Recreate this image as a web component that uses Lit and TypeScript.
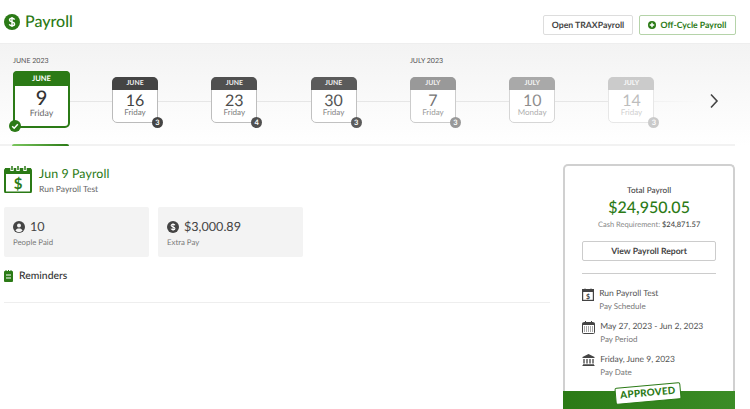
import { LitElement, html, css, unsafeCSS } from "lit";
import { customElement } from "lit/decorators.js";

const G = "#2b7a16";
const GC = unsafeCSS(G);

const cards = [
  { m: "JUNE", d: "16", w: "Friday", b: "3", o: 1, h: "#444" },
  { m: "JUNE", d: "23", w: "Friday", b: "4", o: 0.95, h: "#474747" },
  { m: "JUNE", d: "30", w: "Friday", b: "3", o: 0.9, h: "#4a4a4a" },
  { m: "JULY", d: "7", w: "Friday", b: "3", o: 0.75, h: "#777", label: "JULY 2023" },
  { m: "JULY", d: "10", w: "Monday", b: "", o: 0.6, h: "#717171" },
  { m: "JULY", d: "14", w: "Friday", b: "3", o: 0.35, h: "#6d6d6d" },
];

const dollar = (fill: string, size: number) => html`<svg width=${size} height=${size} viewBox="0 0 16 16">
  <circle cx="8" cy="8" r="8" fill=${fill}></circle>
  <path d="M10.6 5.6C10.2 4.7 9.2 4.3 8 4.3c-1.4 0-2.5.7-2.5 1.8 0 2.4 5.1 1.3 5.1 3.8 0 1.1-1.1 1.8-2.6 1.8-1.3 0-2.3-.5-2.7-1.5M8 3v10" fill="none" stroke="#fff" stroke-width="1.4"></path>
</svg>`;

@customElement("app-root")
export class AppRoot extends LitElement {
  static styles = css`
    :host { display: block; width: 750px; height: 409px; overflow: hidden; background: #fff; font-family: Lato, "Liberation Sans", sans-serif; color: #444; position: relative; text-rendering: geometricPrecision; }
    * { box-sizing: border-box; }
    .top { height: 43px; display: flex; align-items: center; padding: 0 14px 0 4px; }
    .title { display: flex; align-items: center; gap: 5px; font-size: 16px; color: ${GC}; font-weight: 500; flex: 1; }
    .btn { height: 20px; border: 1px solid #ddd; border-radius: 2px; font-size: 8.700px; font-weight: 700; color: #444; display: flex; align-items: center; justify-content: center; background: #fff; margin-top: 6px; }
    .trax { width: 90px; margin-right: 6px; }
    .off { width: 97px; color: ${GC}; border-color: #b5d3a9; gap: 5px; padding-right: 1px; }
    .strip { height: 103px; background: linear-gradient(#f3f3f3, #fff); border-top: 1px solid #eee; position: relative; padding: 13px 0 0 13px; display: flex; }
    .strip::after { content: ""; position: absolute; left: 0; bottom: 0; width: 735px; height: 2px; background: #f2f2f2; }
    .line { position: absolute; left: 60px; top: 57px; width: 640px; height: 1px; background: linear-gradient(90deg, #e6e6e6 85%, transparent); }
    .col { width: 99.3px; flex: none; position: relative; }
    .col.first { width: 99px; }
    .mlabel { position: absolute; top: 0; left: 0; font-size: 7px; line-height: 9px; color: #555; white-space: nowrap; }
    .cal { position: absolute; top: 20px; left: 0; width: 46px; height: 45.500px; background: #fff; border-radius: 5px; }
    .inner { height: 100%; border: 1px solid #bbb; border-radius: 5px; text-align: center; position: relative; }
    .inner .hd { height: 12.500px; margin: -1px -1px 0; border-radius: 5px 5px 0 0; font-size: 6.800px; color: #eee; line-height: 13px; font-weight: 700; }
    .inner .day { font-size: 16px; line-height: 15px; margin-top: 3px; color: #444; }
    .inner .wd { font-size: 8px; line-height: 9px; color: #777; }
    .badge { position: absolute; right: -6px; bottom: -6px; width: 11px; height: 11px; border-radius: 50%; color: #fff; font-size: 7.500px; font-weight: 700; line-height: 11px; text-align: center; }
    .sel { position: absolute; left: 0; top: 14px; width: 57px; height: 57px; border: 2px solid ${GC}; border-radius: 5px; background: #fff; text-align: center; }
    .sel .hd { height: 15px; margin: -2px -2px 0; background: ${GC}; border-radius: 4px 4px 0 0; color: #fff; font-size: 7.500px; font-weight: 700; line-height: 15px; }
    .sel .day { font-size: 20px; font-weight: 500; line-height: 20px; margin-top: 2px; color: #333; }
    .sel .wd { font-size: 8.800px; line-height: 10px; color: #666; }
    .chk { position: absolute; left: -6px; bottom: -6px; display: block; }
    .ind { position: absolute; left: 12px; bottom: 0; z-index: 1; width: 57px; height: 2px; background: linear-gradient(90deg, #7cc75f, ${GC}); border-radius: 2px 2px 0 0; }
    .arrow { position: absolute; left: 708.500px; top: 49px; display: block; }
    .main { display: flex; padding: 19px 15px 0 4px; }
    .left { width: 547px; }
    .head { display: flex; gap: 7px; align-items: flex-start; }
    .h1 { font-size: 12.400px; color: ${GC}; line-height: 17px; letter-spacing: .1px; }
    .h2 { font-size: 8.500px; color: #666; line-height: 12px; margin-top: 1px; }
    .stats { display: flex; gap: 9px; margin-top: 12px; }
    .stat { width: 145px; height: 50px; background: #f3f3f3; border-radius: 2px; padding: 13px 9px 0; }
    .val { display: flex; align-items: center; gap: 5px; font-size: 12.600px; line-height: 14px; color: #444; }
    .cap { font-size: 7.800px; color: #777; line-height: 10px; margin-top: 3px; }
    .rem { display: flex; align-items: center; gap: 6px; font-size: 10.400px; color: #333; font-weight: 500; margin-top: 12px; height: 14px; }
    .rule { height: 1px; background: #eee; margin-top: 19px; }
    .panel { width: 172px; margin-left: 13px; margin-top: -1px; height: 261px; border: 2px solid #d0d0d0; border-bottom: none; border-radius: 5px 5px 0 0; position: relative; padding: 19px 17px 0; text-align: center; }
    .tp { font-size: 8.200px; color: #444; line-height: 11px; font-weight: 500; }
    .amt { font-size: 16px; color: ${GC}; line-height: 20px; font-weight: 500; margin-top: 2px; }
    .cash { font-size: 7.500px; color: #888; line-height: 10px; margin-top: 2px; }
    .cash b { color: #444; font-weight: 500; }
    .view { height: 20px; border: 1px solid #ccc; border-radius: 2px; font-size: 8.600px; font-weight: 700; color: #444; display: flex; align-items: center; justify-content: center; margin-top: 11px; }
    .sep { height: 1px; background: #ccc; margin-top: 12px; }
    .rows { margin-top: 14px; text-align: left; display: flex; flex-direction: column; gap: 10px; }
    .row { display: flex; align-items: flex-start; gap: 5px; }
    .row svg { flex: none; }
    .rt { font-size: 8.500px; color: #555; line-height: 11px; }
    .rs { font-size: 8px; color: #777; line-height: 10px; margin-top: 2px; }
    .foot { position: absolute; left: -2px; right: -2px; top: 225px; height: 18px; background: linear-gradient(90deg, #2b7a16, #3b8c26); }
    .stamp { position: absolute; left: 52px; top: -6px; width: 66px; height: 17px; background: #fff; border: 1px solid ${GC}; border-radius: 2px; transform: rotate(-5deg); color: ${GC}; font-size: 9.800px; font-weight: 900; line-height: 15px; text-align: center; letter-spacing: .3px; }
  `;

  render() {
    return html`
      <div class="top">
        <div class="title">${dollar(G, 16)}<span>Payroll</span></div>
        <div class="btn trax">Open TRAXPayroll</div>
        <div class="btn off">
          <svg width="8" height="8" viewBox="0 0 10 10"><circle cx="5" cy="5" r="5" fill=${G}></circle><path d="M5 2.200v5.600M2.200 5h5.600" stroke="#fff" stroke-width="1.800"></path></svg>
          Off-Cycle Payroll
        </div>
      </div>
      <div class="strip">
        <div class="line"></div>
        <div class="col first">
          <div class="mlabel">JUNE 2023</div>
          <div class="sel">
            <div class="hd">JUNE</div>
            <div class="day">9</div>
            <div class="wd">Friday</div>
            <svg class="chk" width="12" height="12" viewBox="0 0 12 12"><circle cx="6" cy="6" r="6" fill=${G}></circle><path d="M3.200 6.200l2 2 3.600-4" fill="none" stroke="#fff" stroke-width="1.500"></path></svg>
          </div>
        </div>
        ${cards.map(
          (c) => html`<div class="col">
            ${c.label ? html`<div class="mlabel">${c.label}</div>` : ""}
            <div class="cal">
              <div class="inner" style="opacity:${c.o}">
                <div class="hd" style="background:${c.h}">${c.m}</div>
                <div class="day">${c.d}</div>
                <div class="wd">${c.w}</div>
                ${c.b ? html`<div class="badge" style="background:${c.h}">${c.b}</div>` : ""}
              </div>
            </div>
          </div>`
        )}
        <svg class="arrow" width="10" height="16" viewBox="0 0 10 16"><path d="M2 1.500L8 8l-6 6.500" fill="none" stroke="#444" stroke-width="1.600"></path></svg>
        <div class="ind"></div>
      </div>
      <div class="main">
        <div class="left">
          <div class="head">
            <svg width="28" height="28" viewBox="0 0 28 28">
              <path d="M2.500 4H25.500a1.500 1.500 0 0 1 1.500 1.500V26a1.500 1.500 0 0 1-1.500 1.500H2.500A1.500 1.500 0 0 1 1 26V5.500A1.500 1.500 0 0 1 2.500 4z" fill="none" stroke=${G} stroke-width="2"></path>
              <path d="M1 3h26v6H1z" fill=${G}></path>
              <path d="M8 0v6M14 0v6M21 0v6" stroke="#fff" stroke-width="3.400"></path>
              <path d="M8 1v4M14 1v4M21 1v4" stroke=${G} stroke-width="1.500"></path>
              <text x="14" y="24" text-anchor="middle" font-size="15" font-weight="700" fill=${G} font-family="Lato">$</text>
            </svg>
            <div><div class="h1">Jun 9 Payroll</div><div class="h2">Run Payroll Test</div></div>
          </div>
          <div class="stats">
            <div class="stat">
              <div class="val">
                <svg width="12" height="12" viewBox="0 0 12 12"><circle cx="6" cy="6" r="6" fill="#444"></circle><circle cx="6" cy="4.600" r="2" fill="#f3f3f3"></circle><path d="M2.400 9.600C3 7.900 4.300 7.400 6 7.400s3 .5 3.600 2.200a5 5 0 0 1-7.200 0z" fill="#f3f3f3"></path></svg>
                10
              </div>
              <div class="cap">People Paid</div>
            </div>
            <div class="stat">
              <div class="val">${dollar("#444", 12)} $3,000.89</div>
              <div class="cap">Extra Pay</div>
            </div>
          </div>
          <div class="rem">
            <svg width="9" height="12" viewBox="0 0 9 12"><rect y="1" width="9" height="11" rx="1" fill=${G}></rect><path d="M2 0v2M4.500 0v2M7 0v2" stroke=${G} stroke-width="1"></path><path d="M2 5h5M2 8h5" stroke="#fff" stroke-width="1"></path></svg>
            Reminders
          </div>
          <div class="rule"></div>
        </div>
        <div class="panel">
          <div class="tp">Total Payroll</div>
          <div class="amt">$24,950.05</div>
          <div class="cash">Cash Requirement: <b>$24,871.57</b></div>
          <div class="view">View Payroll Report</div>
          <div class="sep"></div>
          <div class="rows">
            <div class="row">
              <svg width="12" height="13" viewBox="0 0 12 13"><rect x=".6" y="1.600" width="10.800" height="10.800" fill="none" stroke="#444" stroke-width="1.200"></rect><path d="M.6 2h10.800v2H.6z" fill="#444"></path><path d="M3 .5v2M9 .5v2" stroke="#444"></path><text x="6" y="11" text-anchor="middle" font-size="7" font-weight="700" fill="#444" font-family="Lato">$</text></svg>
              <div><div class="rt">Run Payroll Test</div><div class="rs">Pay Schedule</div></div>
            </div>
            <div class="row">
              <svg width="13" height="13" viewBox="0 0 13 13"><rect x=".5" y="1.500" width="12" height="11" rx="1" fill="none" stroke="#444"></rect><path d="M.5 2h12v2H.5z" fill="#444"></path><path d="M3.500 0v2.500M9.500 0v2.500" stroke="#444"></path><path d="M2 6h9M2 8h9M2 10h9" stroke="#555" stroke-dasharray="1 1"></path></svg>
              <div><div class="rt">May 27, 2023 - Jun 2, 2023</div><div class="rs">Pay Period</div></div>
            </div>
            <div class="row">
              <svg width="13" height="12" viewBox="0 0 12 12"><path d="M6 0l6 3v1H0V3z" fill="#444"></path><path d="M1.500 5v4.500M4.500 5v4.500M7.500 5v4.500M10.500 5v4.500" stroke="#444" stroke-width="1.300"></path><path d="M.5 10h11v.8H.5zM0 11h12v1H0z" fill="#444"></path></svg>
              <div><div class="rt">Friday, June 9, 2023</div><div class="rs">Pay Date</div></div>
            </div>
          </div>
          <div class="foot"><div class="stamp">APPROVED</div></div>
        </div>
      </div>
    `;
  }
}
